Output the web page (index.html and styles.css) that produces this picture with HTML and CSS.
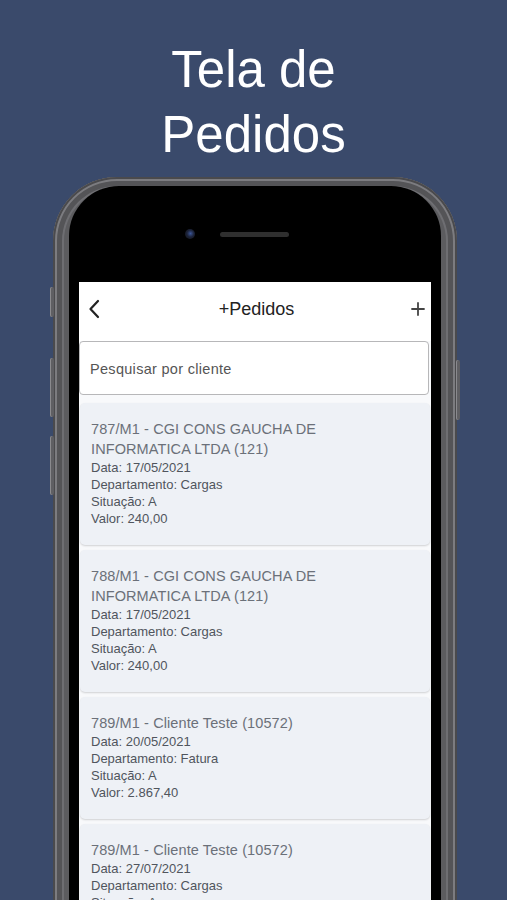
FILE: index.html
```html
<!DOCTYPE html>
<html lang="pt-BR">
<head>
    <meta charset="UTF-8">
    <meta name="viewport" content="width=device-width, initial-scale=1.0">
    <title>Tela de Pedidos</title>
    <link rel="stylesheet" href="styles.css">
</head>
<body>
    <h1 class="headline">Tela de<br>Pedidos</h1>

    <div class="phone">
        <span class="side-btn mute"></span>
        <span class="side-btn vol-up"></span>
        <span class="side-btn vol-down"></span>
        <span class="side-btn power"></span>

        <div class="bezel">
            <div class="sensors">
                <span class="camera"></span>
                <span class="speaker"></span>
            </div>

            <div class="screen">
                <div class="navbar">
                    <svg class="nav-back" width="12" height="20" viewBox="0 0 12 20">
                        <path d="M10 2 L2.5 10 L10 18" fill="none" stroke="#222" stroke-width="2.2" stroke-linecap="round" stroke-linejoin="round"/>
                    </svg>
                    <div class="nav-title">+Pedidos</div>
                    <svg class="nav-add" width="14" height="14" viewBox="0 0 14 14">
                        <path d="M7 1 V13 M1 7 H13" fill="none" stroke="#444" stroke-width="1.8" stroke-linecap="round"/>
                    </svg>
                </div>

                <input class="search" type="text" placeholder="Pesquisar por cliente">

                <div class="orders">
                    <div class="order-card">
                        <p class="order-title">787/M1 - CGI CONS GAUCHA DE INFORMATICA LTDA (121)</p>
                        <p>Data: 17/05/2021</p>
                        <p>Departamento: Cargas</p>
                        <p>Situação: A</p>
                        <p>Valor: 240,00</p>
                    </div>
                    <div class="order-card">
                        <p class="order-title">788/M1 - CGI CONS GAUCHA DE INFORMATICA LTDA (121)</p>
                        <p>Data: 17/05/2021</p>
                        <p>Departamento: Cargas</p>
                        <p>Situação: A</p>
                        <p>Valor: 240,00</p>
                    </div>
                    <div class="order-card">
                        <p class="order-title">789/M1 - Cliente Teste (10572)</p>
                        <p>Data: 20/05/2021</p>
                        <p>Departamento: Fatura</p>
                        <p>Situação: A</p>
                        <p>Valor: 2.867,40</p>
                    </div>
                    <div class="order-card">
                        <p class="order-title">789/M1 - Cliente Teste (10572)</p>
                        <p>Data: 27/07/2021</p>
                        <p>Departamento: Cargas</p>
                        <p>Situação: A</p>
                        <p>Valor: 1.120,00</p>
                    </div>
                </div>
            </div>
        </div>
    </div>
</body>
</html>
```

FILE: styles.css
```css
html, body {
    height: 900px;
    overflow: hidden;
}

body {
    background-color: #3a4a6b;
    font-family: "Liberation Sans", Arial, sans-serif;
    margin: 0;
    padding: 0;
}

.headline {
    margin: 0;
    padding-top: 37px;
    color: #fff;
    font-size: 51px;
    font-weight: normal;
    line-height: 65px;
    text-align: center;
}

/* phone mockup */
.phone {
    position: relative;
    box-sizing: border-box;
    width: 404px;
    height: 740px;
    margin: 10px 0 0 53px;
    padding: 9px 16px 0;
    border-radius: 64px 64px 0 0;
    background-color: #5c5c5f;
    box-shadow: inset 0 0 0 2px #4a4a4d, inset 0 0 0 4px #7c7c80, inset 0 0 0 9px #545457, inset 0 0 0 11px #6e6e72;
}

.side-btn {
    position: absolute;
    width: 4px;
    border-radius: 2px;
    background-color: #5f5f63;
    box-shadow: inset 1px 0 0 #8a8a8e;
}

.mute { left: -3px; top: 110px; height: 30px; }
.vol-up { left: -3px; top: 181px; height: 59px; }
.vol-down { left: -3px; top: 259px; height: 59px; }
.power { right: -3px; top: 183px; height: 60px; }

.bezel {
    height: 100%;
    padding: 0 10px;
    border-radius: 50px 50px 0 0;
    background-color: #000;
}

.sensors {
    display: flex;
    align-items: center;
    height: 96px;
    padding-left: 106px;
}

.camera {
    width: 10px;
    height: 10px;
    border-radius: 50%;
    background: radial-gradient(circle at 55% 45%, #3b5597 0, #1b2238 45%, #111 100%);
}

.speaker {
    width: 69px;
    height: 5px;
    margin-left: 25px;
    border-radius: 3px;
    background-color: #2f2f2f;
}

/* app screen */
.screen {
    height: 100%;
    background-color: #f8f9fb;
}

.navbar {
    box-sizing: border-box;
    display: grid;
    grid-template-columns: 1fr auto 1fr;
    align-items: center;
    height: 59px;
    padding: 0 6px 5px 9px;
    background-color: #fff;
}

.nav-title {
    color: #222;
    font-size: 18px;
}

.nav-add {
    justify-self: end;
}

.search {
    display: block;
    box-sizing: border-box;
    width: 350px;
    height: 54px;
    margin: 0;
    padding: 2px 10px 0;
    border: 1px solid #b7b7b9;
    border-radius: 4px;
    background-color: #fff;
    font-family: inherit;
    font-size: 14.5px;
    letter-spacing: 0.3px;
    color: #555;
}

.search::placeholder {
    color: #555;
}

.orders {
    display: flex;
    flex-direction: column;
    gap: 5px;
    padding: 8px 1px 0;
}

.order-card {
    padding: 16px 12px 18px 11px;
    border-radius: 5px;
    background-color: #eef1f6;
    box-shadow: 0 1px 2px rgba(0, 0, 0, 0.16);
    color: #50555d;
    font-size: 13px;
    line-height: 17px;
}

.order-card p {
    margin: 0;
}

.order-card .order-title {
    color: #6b7079;
    font-size: 14.5px;
    line-height: 20px;
    letter-spacing: 0.1px;
}
```
